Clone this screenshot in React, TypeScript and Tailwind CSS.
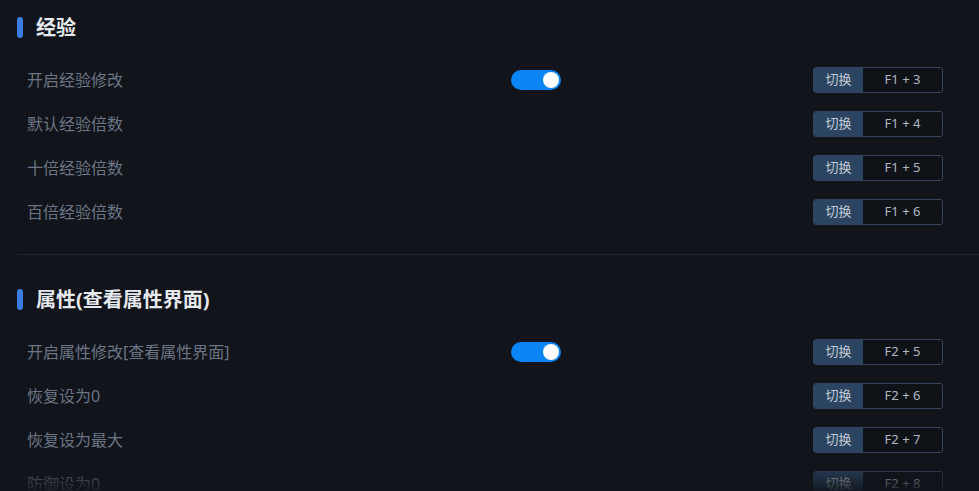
import { useState } from 'react';

type Row = { label: string; keys: string; toggle?: boolean };

const sections: { title: string; rows: Row[] }[] = [
  {
    title: '经验',
    rows: [
      { label: '开启经验修改', keys: 'F1 + 3', toggle: true },
      { label: '默认经验倍数', keys: 'F1 + 4' },
      { label: '十倍经验倍数', keys: 'F1 + 5' },
      { label: '百倍经验倍数', keys: 'F1 + 6' },
    ],
  },
  {
    title: '属性(查看属性界面)',
    rows: [
      { label: '开启属性修改[查看属性界面]', keys: 'F2 + 5', toggle: true },
      { label: '恢复设为0', keys: 'F2 + 6' },
      { label: '恢复设为最大', keys: 'F2 + 7' },
      { label: '防御设为0', keys: 'F2 + 8' },
    ],
  },
];

const Toggle = ({ on, onClick }: { on: boolean; onClick: () => void }) => (
  <button
    onClick={onClick}
    className={`w-[50px] h-[20px] rounded-full flex items-center px-[2px] ${on ? 'bg-[#0b84f5] justify-end' : 'bg-[#2c3440] justify-start'}`}
  >
    <span className="w-[16px] h-[16px] rounded-full bg-white" />
  </button>
);

const KeyBind = ({ keys }: { keys: string }) => (
  <div className="flex h-[26px] w-[130px] rounded-[3px] border border-[#34445a] overflow-hidden text-[13px]">
    <div className="w-[49px] bg-[#2a4461] text-[#c3ccd6] flex items-center justify-center">切换</div>
    <div className="flex-1 bg-[#0f1318] text-[#aeb6c2] flex items-center justify-center">{keys}</div>
  </div>
);

const App = () => {
  const [on, setOn] = useState<Record<string, boolean>>({ '开启经验修改': true, '开启属性修改[查看属性界面]': true });

  return (
    <div
      className="relative w-full h-[491px] overflow-hidden bg-[#11151b]"
      style={{ fontFamily: '"Noto Sans", "Noto Sans CJK SC", sans-serif' }}
    >
      {sections.map((s, i) => (
        <div key={s.title}>
          {i > 0 && <div className="ml-[17px] mt-[20px] h-px bg-[#1f252e]" />}
          <div className={`pl-[17px] ${i === 0 ? 'pt-[17px]' : 'pt-[34px]'}`}>
            <div className="flex items-center h-[21px]">
              <span className="w-[6px] h-[21px] rounded-[3px] bg-[#3b7de0]" />
              <h2 className="ml-[13px] text-[20px] font-bold text-[#e6e9ee] leading-none">{s.title}</h2>
            </div>
            <div className="mt-[20px] pl-[10px] pr-[36px]">
              {s.rows.map((r) => (
                <div key={r.label} className="flex items-center h-[44px]">
                  <div className="w-[484px] text-[16px] text-[#6b7484]">{r.label}</div>
                  <div className="w-[50px]">
                    {r.toggle && (
                      <Toggle on={!!on[r.label]} onClick={() => setOn({ ...on, [r.label]: !on[r.label] })} />
                    )}
                  </div>
                  <div className="ml-auto">
                    <KeyBind keys={r.keys} />
                  </div>
                </div>
              ))}
            </div>
          </div>
        </div>
      ))}
      <div className="absolute left-0 right-0 bottom-0 h-[28px] bg-gradient-to-t from-[#11151b]/90 to-[#11151b]/0 pointer-events-none" />
    </div>
  );
};

export default App;
